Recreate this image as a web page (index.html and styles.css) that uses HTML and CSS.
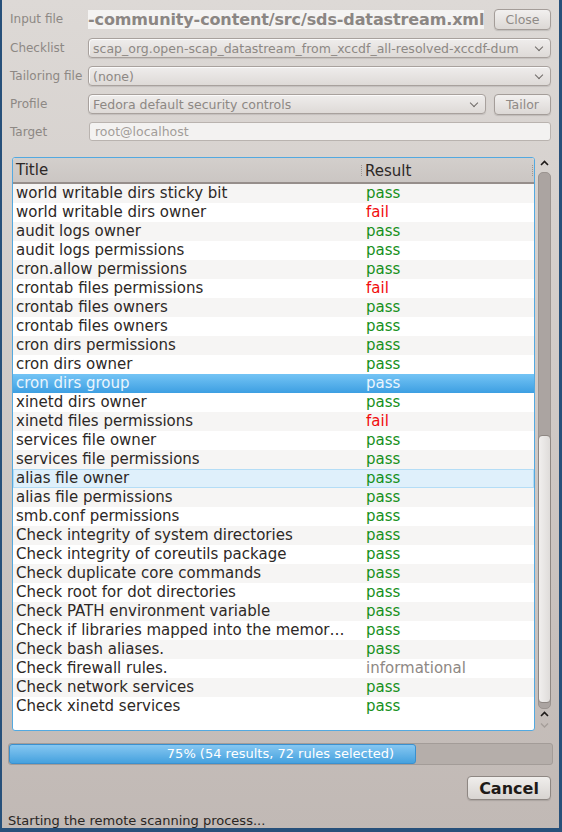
FILE: index.html
```html
<!DOCTYPE html>
<html lang="en">

<head>
  <meta charset="UTF-8">
  <meta name="viewport" content="width=device-width, initial-scale=1.0">
  <title>SCAP Workbench</title>
  <link rel="stylesheet" href="styles.css">
</head>

<body>
  <div class="window">
    <div class="form">
      <div class="label">Input file</div>
      <div class="fileRow">
        <span class="fileName">-community-content/src/sds-datastream.xml</span>
        <button class="btn">Close</button>
      </div>

      <div class="label">Checklist</div>
      <div class="combo"><span>scap_org.open-scap_datastream_from_xccdf_all-resolved-xccdf-dum</span><i class="chev"></i></div>

      <div class="label">Tailoring file</div>
      <div class="combo"><span>(none)</span><i class="chev"></i></div>

      <div class="label">Profile</div>
      <div class="fieldRow">
        <div class="combo grow"><span>Fedora default security controls</span><i class="chev"></i></div>
        <button class="btn">Tailor</button>
      </div>

      <div class="label">Target</div>
      <div class="target">root@localhost</div>
    </div>

    <div class="results">
      <div class="tree">
        <div class="treeHead">
          <div class="colTitle">Title</div>
          <div class="colResult">Result</div>
        </div>
        <div class="rows">
          <div class="row"><span class="title">world writable dirs sticky bit</span><span class="res pass">pass</span></div>
          <div class="row"><span class="title">world writable dirs owner</span><span class="res fail">fail</span></div>
          <div class="row"><span class="title">audit logs owner</span><span class="res pass">pass</span></div>
          <div class="row"><span class="title">audit logs permissions</span><span class="res pass">pass</span></div>
          <div class="row"><span class="title">cron.allow permissions</span><span class="res pass">pass</span></div>
          <div class="row"><span class="title">crontab files permissions</span><span class="res fail">fail</span></div>
          <div class="row"><span class="title">crontab files owners</span><span class="res pass">pass</span></div>
          <div class="row"><span class="title">crontab files owners</span><span class="res pass">pass</span></div>
          <div class="row"><span class="title">cron dirs permissions</span><span class="res pass">pass</span></div>
          <div class="row"><span class="title">cron dirs owner</span><span class="res pass">pass</span></div>
          <div class="row selected"><span class="title">cron dirs group</span><span class="res pass">pass</span></div>
          <div class="row"><span class="title">xinetd dirs owner</span><span class="res pass">pass</span></div>
          <div class="row"><span class="title">xinetd files permissions</span><span class="res fail">fail</span></div>
          <div class="row"><span class="title">services file owner</span><span class="res pass">pass</span></div>
          <div class="row"><span class="title">services file permissions</span><span class="res pass">pass</span></div>
          <div class="row hover"><span class="title">alias file owner</span><span class="res pass">pass</span></div>
          <div class="row"><span class="title">alias file permissions</span><span class="res pass">pass</span></div>
          <div class="row"><span class="title">smb.conf permissions</span><span class="res pass">pass</span></div>
          <div class="row"><span class="title">Check integrity of system directories</span><span class="res pass">pass</span></div>
          <div class="row"><span class="title">Check integrity of coreutils package</span><span class="res pass">pass</span></div>
          <div class="row"><span class="title">Check duplicate core commands</span><span class="res pass">pass</span></div>
          <div class="row"><span class="title">Check root for dot directories</span><span class="res pass">pass</span></div>
          <div class="row"><span class="title">Check PATH environment variable</span><span class="res pass">pass</span></div>
          <div class="row"><span class="title">Check if libraries mapped into the memor…</span><span class="res pass">pass</span></div>
          <div class="row"><span class="title">Check bash aliases.</span><span class="res pass">pass</span></div>
          <div class="row"><span class="title">Check firewall rules.</span><span class="res info">informational</span></div>
          <div class="row"><span class="title">Check network services</span><span class="res pass">pass</span></div>
          <div class="row"><span class="title">Check xinetd services</span><span class="res pass">pass</span></div>
        </div>
      </div>

      <div class="scrollbar">
        <svg class="arrow" width="15" height="12" viewBox="0 0 15 12"><path d="M4 8 L7.5 4.5 L11 8" fill="none" stroke="#1e1a18" stroke-width="1.6"/></svg>
        <div class="trough">
          <div class="thumb"></div>
        </div>
        <svg class="arrow" width="15" height="11" viewBox="0 0 15 11"><path d="M4 7 L7.5 3.5 L11 7" fill="none" stroke="#1e1a18" stroke-width="1.6"/></svg>
        <svg class="arrow" width="15" height="11" viewBox="0 0 15 11"><path d="M4 3.5 L7.5 7 L11 3.5" fill="none" stroke="#a59e9a" stroke-width="1.4"/></svg>
      </div>
    </div>

    <div class="progress">
      <div class="bar" style="width: 75%"></div>
      <div class="barText">75% (54 results, 72 rules selected)</div>
    </div>

    <div class="actions">
      <button class="btn cancel">Cancel</button>
    </div>

    <div class="status">Starting the remote scanning process...</div>
  </div>
</body>

</html>
```

FILE: styles.css
```css
body {
  margin: 0;
  font-family: "DejaVu Sans", sans-serif;
}

.window {
  width: 562px;
  height: 832px;
  box-sizing: border-box;
  border-left: 2px solid #27507a;
  border-right: 3px solid #27507a;
  border-bottom: 4px solid #27507a;
  background: linear-gradient(#ddd9d6, #c1b9b5);
  display: flex;
  flex-direction: column;
}

/* top form */
.form {
  display: grid;
  grid-template-columns: 78px minmax(0, 1fr);
  grid-template-rows: 22px;
  grid-auto-rows: 20px;
  row-gap: 8px;
  padding: 8px 8px 0 8px;
  font-size: 12.5px;
}

.label {
  color: #8d8884;
  font-size: 12px;
  white-space: nowrap;
  display: flex;
  align-items: center;
}

.fileRow,
.fieldRow {
  display: flex;
  gap: 8px;
  align-items: center;
  min-width: 0;
}

.fileName {
  flex: 0 1 auto;
  min-width: 0;
  overflow: hidden;
  font-size: 16px;
  letter-spacing: -0.12px;
  font-weight: bold;
  color: #8b8683;
  white-space: nowrap;
  line-height: 19px;
  background: #f4f3f2;
}

.fileRow .btn {
  margin-left: auto;
}

.btn {
  flex: none;
  font-family: "DejaVu Sans", sans-serif;
  font-size: 12.5px;
  color: #8f8a86;
  width: 57px;
  height: 21px;
  padding: 0;
  border: 1px solid #a49d99;
  border-radius: 4px;
  background: linear-gradient(#f2f0ef, #dcd8d5);
  box-shadow: 0 1px 1px rgba(0, 0, 0, 0.12);
}

.combo {
  display: flex;
  align-items: center;
  justify-content: space-between;
  min-width: 0;
  height: 20px;
  box-sizing: border-box;
  border: 1px solid #a8a19d;
  border-radius: 4px;
  background: linear-gradient(#efedec, #dedad7);
  box-shadow: inset 1px 1px 0 #fbfafa, 0 1px 1px rgba(0, 0, 0, 0.1);
  padding: 0 6px 0 4px;
  color: #8d8884;
  white-space: nowrap;
  overflow: hidden;
}

.combo span {
  overflow: hidden;
}

.grow {
  flex: 1;
}

.chev {
  flex: none;
  width: 5px;
  height: 5px;
  margin: 0 2px 3px 4px;
  border-right: 1.5px solid #6f6a67;
  border-bottom: 1.5px solid #6f6a67;
  transform: rotate(45deg);
}

.target {
  height: 19px;
  box-sizing: border-box;
  margin-left: 1px;
  border: 1px solid #b9b3af;
  border-radius: 3px;
  background: #f3f2f1;
  color: #a29d99;
  padding: 0 5px;
  line-height: 17px;
}

/* results list */
.results {
  display: flex;
  gap: 2px;
  margin: 15px 0 0 10px;
  height: 574px;
}

.tree {
  width: 523px;
  box-sizing: border-box;
  border: 1px solid #53a9e0;
  border-radius: 3px;
  background: #fff;
  overflow: hidden;
}

.treeHead {
  display: flex;
  height: 24px;
  background: linear-gradient(#d3cfcc, #cbc6c3);
  border-bottom: 2px solid #968e8b;
  font-size: 15px;
  color: #2d2826;
  line-height: 24px;
}

.colTitle {
  width: 345px;
  padding-left: 3px;
}

.colResult {
  flex: 1;
  padding-left: 3px;
  border-left: 1px dotted #9d9692;
  margin: 7px 1px 6px 0;
  line-height: 12px;
  border-right: 1px dotted #9d9692;
}

.row {
  display: flex;
  height: 19px;
  font-size: 15px;
  line-height: 19px;
  color: #2d2826;
  white-space: nowrap;
}

.row:nth-child(odd) {
  background: #f6f5f4;
}

.row.selected {
  background: linear-gradient(#74c4f5, #3d9fe2);
  color: #eaf5fd;
}

.row.hover {
  background: #dff0fb;
  box-shadow: inset 0 0 0 1px #b4ddf6;
}

.title {
  width: 349px;
  padding-left: 3px;
  overflow: hidden;
}

.res {
  padding-left: 1px;
}

.pass {
  color: #16901b;
}

.selected .pass {
  color: #eaf5fd;
}

.fail {
  color: #f10d0d;
}

.info {
  color: #8e8884;
}

/* scrollbar */
.scrollbar {
  width: 15px;
  display: flex;
  flex-direction: column;
}

.arrow {
  flex: none;
  display: block;
}

.trough {
  flex: 1;
  margin: 3px 1px 0 1px;
  background: #aba4a1;
  border: 1px solid #9b9490;
  border-radius: 5px;
  display: flex;
  flex-direction: column;
  justify-content: flex-end;
}

.thumb {
  height: 266px;
  background: linear-gradient(90deg, #f1efee, #dfdcda);
  border: 1px solid #8e8783;
  border-radius: 4px;
  margin: 0 -1px 5px -1px;
}

/* progress */
.progress {
  position: relative;
  margin: 12px 6px 0 6px;
  height: 22px;
  box-sizing: border-box;
  border: 1px solid #a39c98;
  border-radius: 3px;
  background: #b5aeaa;
}

.bar {
  height: 100%;
  box-sizing: border-box;
  background: linear-gradient(#86c7f1, #45a1de);
  border: 1px solid #3a90cf;
  border-radius: 3px;
}

.barText {
  position: absolute;
  left: 0;
  right: 0;
  top: 0;
  text-align: center;
  color: #fff;
  font-size: 13px;
  line-height: 20px;
}

.actions {
  display: flex;
  justify-content: flex-end;
  margin: 11px 8px 0 0;
}

.cancel {
  width: 84px;
  height: 24px;
  font-size: 16px;
  font-weight: bold;
  color: #1e1a18;
  border-color: #8e8783;
  background: linear-gradient(#f0eeec, #d8d4d1);
}

.status {
  margin: 13px 0 0 6px;
  font-size: 13px;
  color: #2a2624;
}
```
